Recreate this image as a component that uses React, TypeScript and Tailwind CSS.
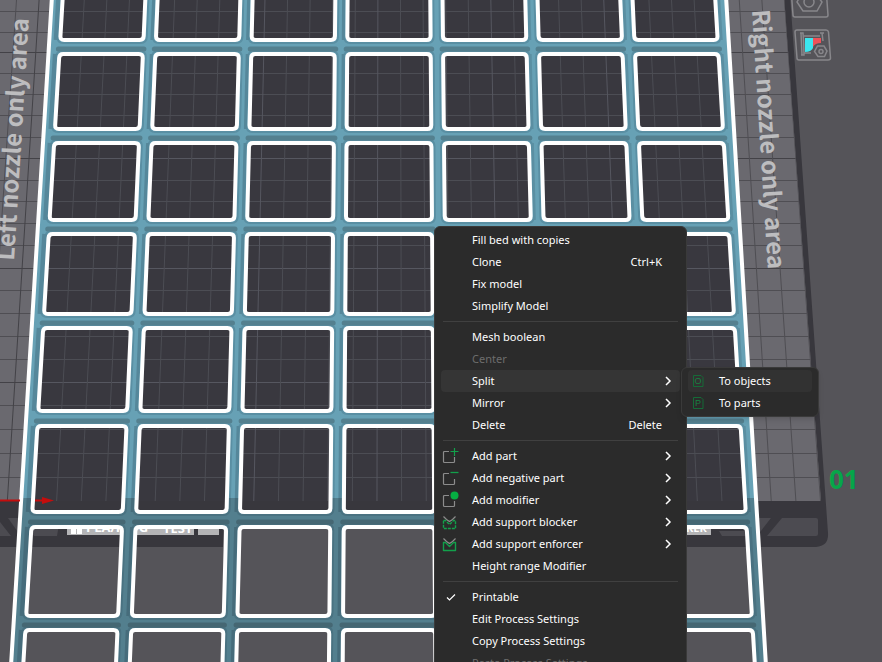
import React from 'react'

type Point = [number, number]

type Item = {
    label: string
    icon?: React.ReactNode
    shortcut?: string
    submenu?: boolean
    disabled?: boolean
    active?: boolean
}

// ---------- scene geometry ----------

const CENTER_X = 388
const HOLE_LEFT = 59.5
const HOLE_PITCH = 95.9
const HOLE_WIDTH = 83.5
const HOLE_ROWS: Point[] = [
    [-40, 40],
    [54, 129],
    [143, 220],
    [234, 314],
    [328, 411],
    [426, 512],
    [527, 616],
    [630, 720],
]
const HOLE_COLS = [0, 1, 2, 3, 4, 5, 6]
const GRID_Y = [11, 32, 52, 73, 94, 115, 137, 158, 180, 201, 223, 245, 268, 290, 313, 336, 359, 382, 405, 429, 453, 477]
const GRID_X = Array.from({ length: 37 }, (_, i) => i - 18)

// the camera looks down at the plate, so things spread out towards the bottom
function project(x: number, y: number): Point {
    return [CENTER_X + (x - CENTER_X) * (1 + 0.00018 * (y - 52)), y]
}

function roundedPath(points: Point[], radius: number) {
    const n = points.length
    const parts = points.map((p, i) => {
        const prev = points[(i + n - 1) % n]
        const next = points[(i + 1) % n]
        const toward = (q: Point) => {
            const d = Math.hypot(q[0] - p[0], q[1] - p[1])
            return [p[0] + ((q[0] - p[0]) * radius) / d, p[1] + ((q[1] - p[1]) * radius) / d]
        }
        const a = toward(prev)
        const b = toward(next)
        return `${i === 0 ? 'M' : 'L'}${a[0]} ${a[1]}Q${p[0]} ${p[1]} ${b[0]} ${b[1]}`
    })
    return parts.join('') + 'Z'
}

function holeCorners(col: number, row: Point) {
    const left = HOLE_LEFT + col * HOLE_PITCH
    const right = left + HOLE_WIDTH
    return {
        tl: project(left, row[0]),
        tr: project(right, row[0]),
        br: project(right, row[1]),
        bl: project(left, row[1]),
    }
}

function holePath(col: number, row: Point, grow: number, radius: number) {
    const { tl, tr, br, bl } = holeCorners(col, row)
    return roundedPath(
        [
            [tl[0] - grow, tl[1] - grow],
            [tr[0] + grow, tr[1] - grow],
            [br[0] + grow, br[1] + grow],
            [bl[0] - grow, bl[1] + grow],
        ],
        radius,
    )
}

const FRAME = 'M52 -4L11 666H766L726 -4Z'
const HOLES = HOLE_ROWS.flatMap((row) => HOLE_COLS.map((col) => holePath(col, row, 0, 4)))

function GridLines({ color, bold }: { color: string; bold: string }) {
    return (
        <g fill="none" stroke={color}>
            {GRID_Y.map((y, i) => (
                <path key={y} d={`M-10 ${y + 0.5}H822`} stroke={i % 5 === 2 ? bold : color} />
            ))}
            {GRID_X.map((k) => {
                const a = project(377.8 + k * 22.8, 0)
                const b = project(377.8 + k * 22.8, 501)
                return <path key={k} d={`M${a[0]} ${a[1]}L${b[0]} ${b[1]}`} stroke={k % 5 === 0 ? bold : color} />
            })}
        </g>
    )
}

// shading on the walls round one hole
function Bevel({ col, row }: { col: number; row: Point }) {
    const { tl, tr, br, bl } = holeCorners(col, row)
    return (
        <g>
            <path d={holePath(col, row, 3, 6)} stroke="#5a8fa3" strokeWidth="2" />
            <path d={`M${tl[0] - 1} ${tl[1] - 5}H${tr[0] + 1}`} stroke="#54808f" strokeWidth="5" strokeLinecap="round" />
            {col < 4 ? (
                <path d={`M${tl[0] - 4} ${tl[1]}L${bl[0] - 4} ${bl[1]}`} stroke="#55879a" strokeWidth={col === 0 ? 5 : 3} />
            ) : (
                <path d={`M${tr[0] + 4} ${tr[1]}L${br[0] + 4} ${br[1]}`} stroke="#5b8fa2" strokeWidth="2" />
            )}
        </g>
    )
}

function Scene() {
    return (
        <svg
            className="absolute inset-0 h-full w-full"
            viewBox="0 0 882 662"
            preserveAspectRatio="xMinYMin slice"
            role="img"
            aria-label="Build plate"
        >
            <defs>
                <clipPath id="bed">
                    <path d="M-10 -5H784L821 501H-10Z" />
                </clipPath>
                <clipPath id="inner">
                    <path d={FRAME} />
                </clipPath>
                <clipPath id="body">
                    <path d={FRAME + HOLES.join('')} clipRule="evenodd" />
                </clipPath>
            </defs>

            <rect width="882" height="662" fill="#555459" />

            {/* Plate */}
            <path d="M-10 -5H790L828 533Q829 546 816 547H-10Z" fill="#38373d" />
            <g fill="#4c4b51">
                <path d="M0 522L11 536H0Z" />
                <path d="M8 518H20V535Z" />
                <path d="M23 518H60L57 536H34Z" />
                <path d="M719 531H760V536H722Z" />
                <path d="M756 518H771L757 536Z" />
                <path d="M782 518H816Q818 518 818 520V534Q818 536 816 536H767Z" />
            </g>
            <path d="M223 526H684V548H223Z" fill="#555459" />
            <path d="M-10 -5H784L821 501H-10Z" fill="#6a696f" />
            <g clipPath="url(#bed)">
                <GridLines color="#4f4e53" bold="#434247" />
                <g clipPath="url(#inner)">
                    <path d="M-10 -5H830V501H-10Z" fill="#39383f" />
                    <GridLines color="#4c4d54" bold="#565760" />
                </g>
            </g>

            {/* Plate labels along the front edge */}
            <path d="M67 523H194V535H67ZM198 523H219V535H198ZM684 523H711V535H684Z" fill="#b4b4b6" />
            <g fill="#fff" className="font-['Open_Sans',sans-serif] text-[13px] font-bold">
                <path d="M71 527H76V534H71ZM77 527H82V534H77Z" />
                <text x="86" y="532">PLA/PETG</text>
                <text x="163" y="533">TEST</text>
                <text x="686" y="532" className="text-[11px]">KER</text>
            </g>

            <g fill="#bdbdbf" className="font-['Noto_Sans_CJK_SC',sans-serif] text-[24px] font-bold">
                <text transform="translate(14 261) rotate(-86.5)">Left nozzle only area</text>
                <text transform="translate(752 10) rotate(86.5)">Right nozzle only area</text>
            </g>
            <text x="829" y="489" fill="#06a649" className="font-['Noto_Sans',sans-serif] text-[26px] font-bold">
                01
            </text>

            {/* Model */}
            <g clipPath="url(#body)">
                <path d={FRAME} fill="#67a1b5" />
                <g fill="none">
                    {HOLE_ROWS.map((row) => HOLE_COLS.map((col) => <Bevel key={`${row[0]}-${col}`} col={col} row={row} />))}
                </g>
                <rect y="498" width="882" height="164" fill="#20282c" opacity="0.28" />
            </g>
            <g fill="none" stroke="#fff" strokeWidth="4">
                {HOLES.map((d) => (
                    <path key={d} d={d} />
                ))}
                <path d={FRAME} />
            </g>

            {/* X axis */}
            <path d="M0 500.5H20M35 500.5H46" stroke="#c40d0d" strokeWidth="2" />
            <path d="M42 497L54 500.5L42 504Z" fill="#c40d0d" />
        </svg>
    )
}

// ---------- icons ----------

const BOX = 'M7 4.5H2.5q-1 0-1 1v9q0 1 1 1h9q1 0 1-1V10'

function PartIcon({ kind }: { kind: 'plus' | 'minus' | 'dot' }) {
    return (
        <svg className="h-[18px] w-[18px]" viewBox="0 0 18 18" fill="none">
            <path d={BOX} stroke="#8c8c8c" strokeWidth="1.2" />
            {kind === 'plus' && <path d="M12.5 1v8M8.5 4.5h8" stroke="#12a04b" strokeWidth="1.2" />}
            {kind === 'minus' && <path d="M8.5 3.5h8" stroke="#12a04b" strokeWidth="1.3" />}
            {kind === 'dot' && <circle cx="12.5" cy="4.5" r="4" fill="#06ae42" />}
        </svg>
    )
}

function SupportIcon({ dashed }: { dashed?: boolean }) {
    return (
        <svg className="h-[18px] w-[18px]" viewBox="0 0 18 18" fill="none">
            <path d="M1.5 3.5L4.5 6.5L7.5 8.5L10.5 6.5L13.5 3.5" stroke="#8c8c8c" strokeWidth="1.2" />
            <path
                d="M1.5 7.5H3.5L7.5 11.5L11.5 7.500H13.5V15.5H1.5Z"
                stroke="#12a04b"
                strokeWidth="1.4"
                strokeLinejoin="round"
                strokeDasharray={dashed ? '3 1' : undefined}
            />
        </svg>
    )
}

function SplitIcon({ letter }: { letter: string }) {
    return (
        <svg className="h-[14px] w-[12px]" viewBox="0 0 12 14" fill="none">
            <path d="M1.5 1.5H9L11 3.5V12.5H1.5Z" stroke="#156b37" />
            <text x="6" y="10" textAnchor="middle" fill="#188041" className="font-['Liberation_Sans',sans-serif] text-[9px]">
                {letter}
            </text>
        </svg>
    )
}

function CheckIcon() {
    return (
        <svg className="ml-1 h-[10px] w-[10px]" viewBox="0 0 10 10" fill="none">
            <path d="M1 5.5L3.5 8L9 2.5" stroke="#fff" strokeWidth="1.2" />
        </svg>
    )
}

function Chevron() {
    return (
        <svg className="mr-2 h-[10px] w-[8px]" viewBox="0 0 8 10" fill="none">
            <path d="M2 1L6 5L2 9" stroke="#fff" strokeWidth="1.5" />
        </svg>
    )
}

// ---------- menu ----------

const groups: Item[][] = [
    [
        { label: 'Fill bed with copies' },
        { label: 'Clone', shortcut: 'Ctrl+K' },
        { label: 'Fix model' },
        { label: 'Simplify Model' },
    ],
    [
        { label: 'Mesh boolean' },
        { label: 'Center', disabled: true },
        { label: 'Split', submenu: true, active: true },
        { label: 'Mirror', submenu: true },
        { label: 'Delete', shortcut: 'Delete' },
    ],
    [
        { label: 'Add part', submenu: true, icon: <PartIcon kind="plus" /> },
        { label: 'Add negative part', submenu: true, icon: <PartIcon kind="minus" /> },
        { label: 'Add modifier', submenu: true, icon: <PartIcon kind="dot" /> },
        { label: 'Add support blocker', submenu: true, icon: <SupportIcon dashed /> },
        { label: 'Add support enforcer', submenu: true, icon: <SupportIcon /> },
        { label: 'Height range Modifier' },
    ],
    [
        { label: 'Printable', icon: <CheckIcon /> },
        { label: 'Edit Process Settings' },
        { label: 'Copy Process Settings' },
        { label: 'Paste Process Settings', disabled: true },
    ],
]

const splitItems: Item[] = [
    { label: 'To objects', icon: <SplitIcon letter="O" />, active: true },
    { label: 'To parts', icon: <SplitIcon letter="P" /> },
]

function MenuRow({ item }: { item: Item }) {
    return (
        <button
            role="menuitem"
            disabled={item.disabled}
            className={`flex h-[22px] w-full items-center rounded-sm text-left whitespace-nowrap text-white disabled:text-[#6d6d6d] ${item.active ? 'bg-[#353535]' : ''}`}
        >
            <span className="flex w-[31px] shrink-0 items-center pl-px">{item.icon}</span>
            <span className="flex-1">{item.label}</span>
            {item.shortcut && <span className="mr-[18px]">{item.shortcut}</span>}
            {item.submenu && <Chevron />}
        </button>
    )
}

function ContextMenu() {
    return (
        <div role="menu" className="absolute top-[226px] left-[434px] w-[253px] rounded-md border border-[#3a3a3a] bg-[#2b2b2b] px-1.5 py-0.5">
            {groups.map((group, i) => (
                <React.Fragment key={i}>
                    {i > 0 && <hr className="mx-0.5 my-1 border-t border-[#404040]" />}
                    {group.map((item) => (
                        <MenuRow key={item.label} item={item} />
                    ))}
                </React.Fragment>
            ))}
        </div>
    )
}

function SplitMenu() {
    return (
        <div role="menu" className="absolute top-[367px] left-[681px] w-[138px] rounded-md border border-[#3a3a3a] bg-[#2b2b2b] px-1.5 py-0.5 shadow-md">
            {splitItems.map((item) => (
                <button
                    key={item.label}
                    role="menuitem"
                    className={`flex h-[22px] w-full items-center rounded-sm text-left text-white ${item.active ? 'bg-[#323232]' : ''}`}
                >
                    <span className="w-[31px] shrink-0 pl-1">{item.icon}</span>
                    {item.label}
                </button>
            ))}
        </div>
    )
}

function PlateButtons() {
    return (
        <div className="absolute top-[-16px] left-[791px] flex flex-col gap-2.5">
            <button aria-label="Plate settings">
                <svg className="h-[34px] w-[42px]" viewBox="0 0 42 34" fill="none" stroke="#88878b" strokeWidth="1.5">
                    <path d="M2 2H33Q35 2 35 4L37 31Q37 33 35 33H4Q2 33 2 31L0 4Z" />
                    <path d="M11 9H24L31 18L26 27H12L6 18Z" />
                    <circle cx="18" cy="18" r="5" />
                </svg>
            </button>
            <button aria-label="Nozzle mapping">
                <svg className="h-[34px] w-[42px]" viewBox="0 0 42 34" fill="none" stroke="#88878b" strokeWidth="1.5">
                    <path d="M6 2H35Q37 2 37.5 4L39.5 30Q39.5 32 37 32H8Q6 32 6 30L4 4Q4 2 6 2Z" />
                    <path d="M14 10H22V20Q20 24 14 24Z" fill="#3be5ee" stroke="none" />
                    <path d="M22 10H30V15Q24 15 22 19Z" fill="#ee5158" stroke="none" />
                    <path d="M9 5H12Q13 16 13 27H10M10 5L11 27M13 8H29M29 5H33M31 5L32 13M13 25H20" />
                    <path d="M26.5 18H33L36 23L33.5 28.5H27L23.5 23.5Z" fill="#555459" />
                    <circle cx="30" cy="23.5" r="2" />
                </svg>
            </button>
        </div>
    )
}

export default function App() {
    return (
        <main className="relative h-screen w-full overflow-hidden bg-[#555459] font-['Noto_Sans','Open_Sans',sans-serif] text-[11px]">
            <Scene />
            <PlateButtons />
            <ContextMenu />
            <SplitMenu />
        </main>
    )
}
